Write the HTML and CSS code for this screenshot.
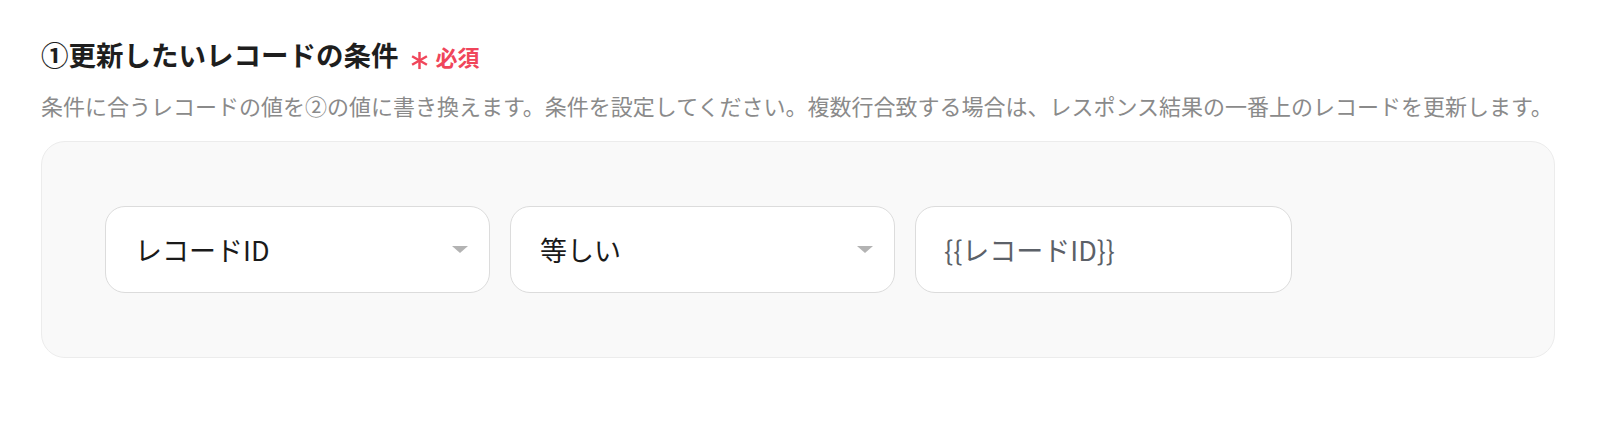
FILE: index.html
```html
<!DOCTYPE html>
<html lang="ja">
<head>
<meta charset="utf-8">
<title>条件</title>
<link rel="stylesheet" href="styles.css">
</head>
<body>
<div class="section">
  <h2 class="title"><span class="title-text">①更新したいレコードの条件</span><span class="req"><svg class="ast" viewBox="0 0 20 20" width="19" height="19"><g stroke="#f0455a" stroke-width="2.6" stroke-linecap="butt"><line x1="10" y1="1" x2="10" y2="19"/><line x1="2.2" y1="5.5" x2="17.8" y2="14.5"/><line x1="2.2" y1="14.5" x2="17.8" y2="5.5"/></g></svg><span class="req-text">必須</span></span></h2>
  <p class="desc">条件に合うレコードの値を②の値に書き換えます。条件を設定してください。複数行合致する場合は、レスポンス結果の一番上のレコードを更新します。</p>
  <div class="panel">
    <div class="row">
      <div class="field select w1"><span class="val">レコードID</span><span class="caret"></span></div>
      <div class="field select w1"><span class="val">等しい</span><span class="caret"></span></div>
      <div class="field input w2"><span class="val muted">{{レコードID}}</span></div>
    </div>
  </div>
</div>
</body>
</html>
```
FILE: styles.css
```css
html, body {
  margin: 0;
  padding: 0;
  background: #ffffff;
}
body {
  font-family: "Noto Sans CJK JP", "Noto Sans", sans-serif;
  color: #222;
}
.section {
  width: 1514px;
  padding: 35px 0 0 41px;
}
.title {
  margin: 0;
  font-size: 27.5px;
  line-height: 38px;
  font-weight: 700;
  color: #1e1e1e;
  display: flex;
  align-items: flex-start;
}
.req {
  display: flex;
  align-items: flex-start;
  margin-left: 11px;
}
.ast {
  margin-top: 16px;
  margin-right: 7px;
}
.req-text {
  margin-top: 10px;
  font-size: 22px;
  line-height: 22px;
  font-weight: 700;
  color: #f0455a;
}
.desc {
  margin: 17px 0 0 0;
  font-size: 22px;
  line-height: 30px;
  color: #8a8a8a;
  white-space: nowrap;
}
.panel {
  margin-top: 21px;
  box-sizing: border-box;
  width: 1514px;
  height: 217px;
  background: #f9f9f9;
  border: 1px solid #ececec;
  border-radius: 24px;
  padding: 64px 0 0 63px;
}
.row {
  display: flex;
  gap: 20px;
}
.field {
  box-sizing: border-box;
  height: 87px;
  background: #fff;
  border: 1px solid #dcdcdc;
  border-radius: 20px;
  display: flex;
  align-items: center;
  justify-content: space-between;
  padding: 0 21px 0 29px;
}
.w1 { width: 385px; }
.w2 { width: 377px; padding-left: 28px; }
.val {
  font-size: 27px;
  line-height: 36px;
  color: #1a1a1a;
}
.val.muted {
  color: #5c6168;
}
.caret {
  width: 0;
  height: 0;
  border-left: 8px solid transparent;
  border-right: 8px solid transparent;
  border-top: 7px solid #b3b3b3;
}
```
